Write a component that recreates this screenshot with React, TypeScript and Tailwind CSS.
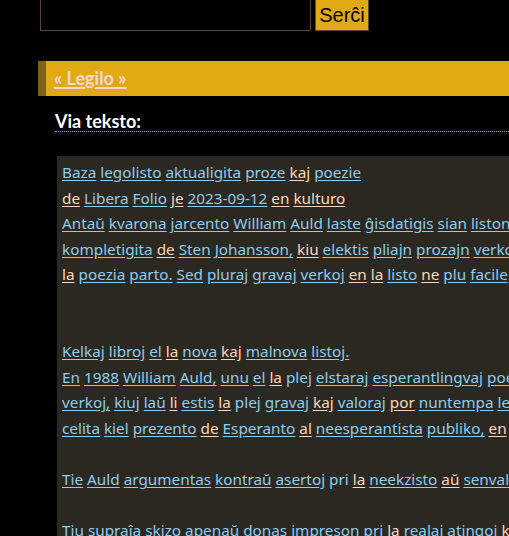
type W = [string, "b" | "p", boolean?];

const b = (t: string): W => [t, "b"];
const p = (t: string): W => [t, "p"];
const n = (t: string): W => [t, "b", false];

const Word = ({ w }: { w: W }) => {
  const [text, tone, underline = true] = w;
  return (
    <span
      className={`${tone === "p" ? "text-[#fdd7bb]" : "text-[#8dcdef]"} ${
        underline ? "underline underline-offset-2" : ""
      }`}
    >
      {text}
    </span>
  );
};

const Line = ({ words }: { words: W[] }) => (
  <div className="whitespace-nowrap h-[25.6px]">
    {words.map((w, i) => (
      <span key={i}>
        <Word w={w} />{" "}
      </span>
    ))}
  </div>
);

const lines: W[][] = [
  [b("Baza"), b("legolisto"), b("aktualigita"), b("proze"), p("kaj"), b("poezie")],
  [p("de"), b("Libera"), b("Folio"), p("je"), b("2023-09-12"), p("en"), p("kulturo")],
  [b("Antaŭ"), b("kvarona"), b("jarcento"), b("William"), b("Auld"), b("laste"), b("ĝisdatigis"), b("sian"), b("liston"), b("de"), b("siaj")],
  [b("kompletigita"), p("de"), b("Sten"), b("Johansson,"), p("kiu"), b("elektis"), b("pliajn"), b("prozajn"), b("verkojn")],
  [p("la"), b("poezia"), b("parto."), b("Sed"), b("pluraj"), b("gravaj"), b("verkoj"), p("en"), p("la"), b("listo"), p("ne"), b("plu"), b("facile"), b("akireblas")],
  [],
  [],
  [b("Kelkaj"), b("libroj"), b("el"), p("la"), b("nova"), p("kaj"), b("malnova"), b("listoj.")],
  [b("En"), b("1988"), b("William"), b("Auld,"), b("unu"), b("el"), p("la"), n("plej"), b("elstaraj"), b("esperantlingvaj"), b("poetoj")],
  [b("verkoj,"), b("kiuj"), b("laŭ"), p("li"), b("estis"), p("la"), n("plej"), b("gravaj"), p("kaj"), b("valoraj"), p("por"), b("nuntempa"), b("legantaro")],
  [b("celita"), b("kiel"), b("prezento"), p("de"), b("Esperanto"), p("al"), b("neesperantista"), b("publiko,"), p("en")],
  [],
  [b("Tie"), b("Auld"), b("argumentas"), b("kontraŭ"), b("asertoj"), n("pri"), p("la"), b("neekzisto"), p("aŭ"), b("senvaloreco")],
  [],
  [b("Tiu"), b("supraĵa"), b("skizo"), b("apenaŭ"), b("donas"), b("impreson"), n("pri"), p("la"), b("realaj"), b("atingoj"), p("kaj")],
];

export default function App() {
  return (
    <div className="h-[536px] w-[509px] overflow-hidden bg-black font-['Lato',sans-serif]">
      <div className="pl-[40px]">
        <div className="flex items-start gap-[4px] -mt-[6px]">
          <div className="h-[37px] w-[271px] border border-[#5b4636] bg-black" />
          <button className="h-[37px] w-[54px] border border-[#5a4a30] bg-[#e1aa14] pt-[4px] font-['Liberation_Sans',sans-serif] text-[20px] text-black">
            Serĉi
          </button>
        </div>
      </div>
      <div className="mt-[30px] ml-[38px] flex h-[35px] w-[600px] items-center border-l-[8px] border-[#7b6219] bg-[#e1aa14] pl-[8px]">
        <a className="not-italic text-[18px] font-bold text-[#f8d6d6] underline decoration-2 underline-offset-2">
          « Legilo »
        </a>
      </div>
      <div className="ml-[55px] mt-[16px] w-[600px] border-b border-dotted border-[#e1aa14] text-[18px] font-bold leading-[19px] text-white">
        Via teksto:
      </div>
      <div className="ml-[57px] mt-[24px] w-[700px] bg-[#2a2820] pl-[5px] pt-[4px] font-['Noto_Sans',sans-serif] text-[15.3px] leading-[25.6px]">
        {lines.map((l, i) => (
          <Line key={i} words={l} />
        ))}
      </div>
    </div>
  );
}
